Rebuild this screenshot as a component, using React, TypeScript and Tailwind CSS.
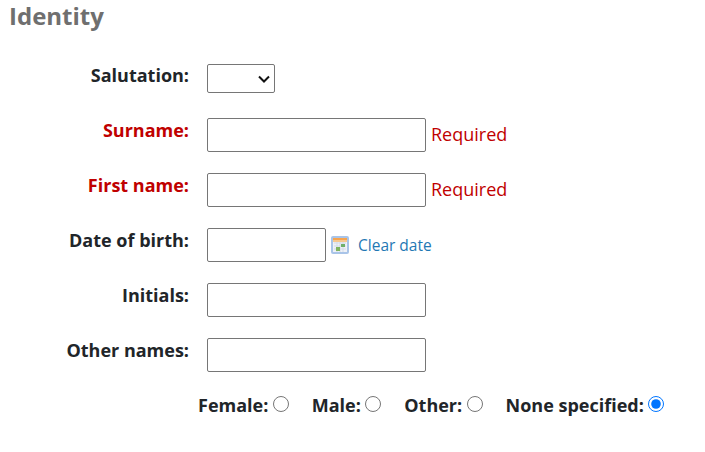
import * as React from 'react';

function Row(props: { label: string; required?: boolean; className?: string; labelClass?: string; children: React.ReactNode }) {
  return (
    <div className={`flex items-center ${props.className ?? ''}`}>
      <label className={`w-[189px] text-right font-bold text-[18px] leading-[24px] ${props.labelClass ?? '-mt-[10px]'} ${props.required ? 'text-[#c00000]' : 'text-[#212529]'}`}>
        {props.label}:
      </label>
      <div className="ml-[18px] flex items-center">{props.children}</div>
    </div>
  );
}

function TextBox(props: { wide?: boolean }) {
  return (
    <input
      type="text"
      className={`h-[34px] bg-white border border-[#767676] rounded-[2px] ${props.wide === false ? 'w-[119px]' : 'w-[219px]'}`}
    />
  );
}

function Required() {
  return <span className="ml-[5px] -mt-[2px] text-[18px] leading-[24px] text-[#c00000]">Required</span>;
}

function CalendarIcon() {
  return (
    <svg width="18" height="18" viewBox="0 0 18 18" className="block">
      <rect x="0" y="0" width="18" height="18" rx="2" fill="#a9c4e8" />
      <rect x="2" y="2" width="14" height="14" fill="#eef1f6" />
      <rect x="2" y="2" width="14" height="2" fill="#f7a44f" />
      <rect x="2" y="4" width="14" height="2" fill="#f6c88f" />
      <path d="M3 7H15M3 10H15M3 13H15M6 6V16M9 6V16M12 6V16" stroke="#d3dbe8" strokeWidth="1" />
      <rect x="5" y="11" width="4" height="4" fill="#7fb45f" />
      <rect x="10" y="8" width="4" height="3" fill="#6fb06a" />
    </svg>
  );
}

function Gender(props: { label: string; checked?: boolean; className?: string }) {
  return (
    <label className={`flex items-center font-bold text-[18px] leading-[24px] text-[#212529] ${props.className ?? ''}`}>
      {props.label}:
      <input
        type="radio"
        name="gender"
        defaultChecked={props.checked}
        className="ml-[4.4px] -mt-[3px] w-[16px] h-[16px]"
      />
    </label>
  );
}

export default function App() {
  return (
    <div className="w-[705px] h-[452px] bg-white overflow-hidden font-['Open_Sans',sans-serif]">
      <h2 className="pl-[9px] pt-[1px] text-[24px] leading-[30px] font-bold text-[#6f6f6f]">Identity</h2>
      <div className="mt-[33px] flex flex-col">
        <Row label="Salutation" className="h-[29px]" labelClass="-mt-[8px]">
          <div className="relative w-[68px] h-[29px]">
            <select className="appearance-none w-full h-full bg-white border border-[#767676] rounded-[2px] text-black" defaultValue="">
              <option value=""></option>
              <option value="mr">Mr</option>
              <option value="ms">Ms</option>
            </select>
            <svg width="12" height="8" viewBox="0 0 12 8" className="absolute right-[5px] top-[11px] pointer-events-none">
              <path d="M1 1.5 L6 6.5 L11 1.5" fill="none" stroke="#111" strokeWidth="2" />
            </svg>
          </div>
        </Row>
        <Row label="Surname" required className="mt-[25px] h-[34px]">
          <TextBox />
          <Required />
        </Row>
        <Row label="First name" required className="mt-[21px] h-[34px]">
          <TextBox />
          <Required />
        </Row>
        <Row label="Date of birth" className="mt-[21px] h-[34px]">
          <TextBox wide={false} />
          <span className="ml-[5px]"><CalendarIcon /></span>
          <a className="ml-[9px] text-[15.5px] leading-[20px] text-[#1f78b4]" href="#">Clear date</a>
        </Row>
        <Row label="Initials" className="mt-[21px] h-[34px]">
          <TextBox />
        </Row>
        <Row label="Other names" className="mt-[21px] h-[34px]">
          <TextBox />
        </Row>
        <div className="mt-[22px] pl-[198px] flex items-center h-[22px]">
          <Gender label="Female" />
          <Gender label="Male" className="ml-[23px]" />
          <Gender label="Other" className="ml-[23px]" />
          <Gender label="None specified" checked className="ml-[23px]" />
        </div>
      </div>
    </div>
  );
}
